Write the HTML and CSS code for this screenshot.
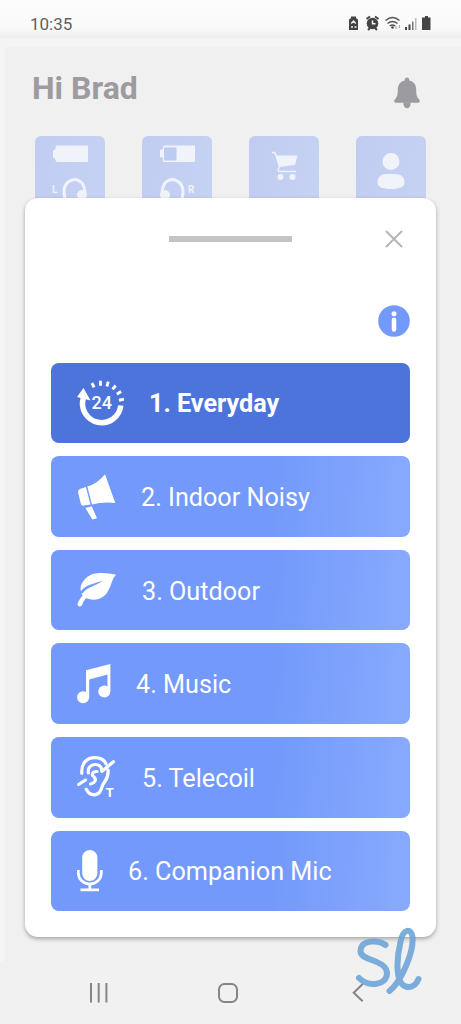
FILE: index.html
```
<!DOCTYPE html>
<html lang="en">
<head>
<meta charset="utf-8">
<title>Programs</title>
<link rel="stylesheet" href="styles.css">
</head>
<body>
<div class="phone">
  <header class="status">
    <span class="time">10:35</span>
    <svg class="status-icons" width="86" height="16" viewBox="0 0 86 16" fill="#444">
      <path d="M3 3V1.500h5V3l2 1.500V15H1V4.500z"/>
      <path d="M3.200 8.500l2.300-2.500 2.300 2.500M3 12h2M6.500 12h2" stroke="#eee" stroke-width="1.400" fill="none"/>
      <circle cx="24.500" cy="8.500" r="5.800"/>
      <path d="M18.500 4l3.500-2.500M30.500 4L27 1.500M20 15l2-2M29 15l-2-2" stroke="#444" stroke-width="2"/>
      <path d="M24.500 5.500v3.300h3" stroke="#f5f5f5" stroke-width="1.500" fill="none"/>
      <path d="M37.500 5.500q7-6 14 0M39.500 8.500q5-4 10 0M41.700 11q2.800-2 5.500 0" stroke="#555" stroke-width="1.500" fill="none"/>
      <circle cx="44.500" cy="12.500" r="1.300"/>
      <path d="M48 11v3M51.500 10v3" stroke="#aaa" stroke-width="1.200"/>
      <path d="M57 12h2v3h-2zM60.500 9.500h2V15h-2z"/>
      <path d="M64 6.500h1.500V15H64z" fill="#777"/>
      <path d="M67 3h1.500v12H67z" fill="#bbb"/>
      <path d="M77 2.500V1h3v1.500h2.500V15h-8.500V2.500z"/>
    </svg>
  </header>
  <main class="home">
    <div class="greeting">
      <h1>Hi Brad</h1>
      <svg width="26" height="32" viewBox="0 0 26 32" fill="#9c9ca0">
        <path d="M13 .500c1.600 0 2.300 1.200 2.300 2.900 4.800 1 6.900 4.600 6.900 9.100 0 5.500.600 7.500 3.200 10.200.900 1.300.200 3-1.600 3H2.200c-1.800 0-2.500-1.700-1.600-3 2.600-2.700 3.200-4.700 3.200-10.200 0-4.500 2.100-8.100 6.900-9.100C10.700 1.700 11.400.500 13 .500z"/>
        <path d="M9.500 25.500h7v2q-.800 3.800-3.500 3.800t-3.500-3.800z"/>
      </svg>
    </div>
    <div class="tiles">
      <div class="tile">
        <svg width="70" height="80" viewBox="0 0 70 80" fill="#f0f3fa">
          <path d="M22 9.500h30q1 0 1 1v14.500q0 1-1 1H22q-1.500 0-1.500-2.500l-2.500-2.500v-6l2.500-2q0-3.500 1.500-3.500z"/>
          <path d="M32 69q-6-15 0-22 8-7 15 0 3 4 3 12" stroke="#f0f3fa" stroke-width="3" fill="none"/>
          <circle cx="47" cy="59" r="5"/>
          <text class="side" x="17" y="57">L</text>
        </svg>
      </div>
      <div class="tile">
        <svg width="70" height="80" viewBox="0 0 70 80" fill="#f0f3fa">
          <path d="M22 9.500h30q1 0 1 1v14.500q0 1-1 1H22q-1 0-1-1v-3l-3-1v-7l3-1v-2q0-1 1-1z"/>
          <path d="M22 11.500h12.500v13H22z" fill="#bccbf2"/>
          <path d="M38 69q6-15 0-22-8-7-15 0-3 4-3 12" stroke="#f0f3fa" stroke-width="3" fill="none"/>
          <circle cx="23" cy="59" r="5"/>
          <text class="side" x="46" y="57">R</text>
        </svg>
      </div>
      <div class="tile">
        <svg width="70" height="80" viewBox="0 0 70 80" fill="#f0f3fa">
          <path d="M27 19.500h21.500L46 29 30 31z"/>
          <path d="M23 16.500h2.500l1.500 2.500 3.500 12-1.500 3 1 1.500h17" stroke="#f0f3fa" stroke-width="1.500" fill="none"/>
          <circle cx="31.500" cy="41" r="3"/><circle cx="43.500" cy="41" r="3"/>
        </svg>
      </div>
      <div class="tile">
        <svg width="70" height="80" viewBox="0 0 70 80" fill="#f0f3fa">
          <circle cx="35" cy="25.500" r="8.500"/>
          <path d="M21.500 46.500q0-8.500 9-8.500h9q9 0 9 8.500 0 6.500-13.500 6.500t-13.500-6.500z"/>
        </svg>
      </div>
    </div>
  </main>
  <nav class="navbar">
    <svg width="20" height="20" viewBox="0 0 20 20"><path d="M3 0v19.500M10.700 0v19.500M18.400 0v19.500"/></svg>
    <svg width="20" height="20" viewBox="0 0 20 20"><rect x="1" y="1" width="18" height="18" rx="5.500"/></svg>
    <svg width="12" height="20" viewBox="0 0 12 20"><path d="M10.700 1L1.700 9.700l9 8.600"/></svg>
  </nav>

  <section class="sheet">
    <div class="sheet-top">
      <span class="handle"></span>
      <svg class="close" width="18" height="18" viewBox="0 0 18 18"><path d="M1 1l16 16M17 1L1 17"/></svg>
    </div>
    <svg class="info" width="32" height="32" viewBox="0 0 32 32">
      <circle cx="16" cy="16" r="15.800" fill="#7299fb"/>
      <circle cx="16" cy="8.800" r="2.500" fill="#fff"/>
      <path d="M16 14.800v9.800" stroke="#fff" stroke-width="4.500" stroke-linecap="round"/>
    </svg>
    <div class="programs">
      <div class="program active">
        <svg width="47" height="48" viewBox="0 0 47 48">
          <path d="M43.800 26.500A19.200 19.200 0 1 1 6.300 19" fill="none" stroke="#fff" stroke-width="5.500"/>
          <path d="M6.500 9L13.500 21.500 0 18z" fill="#fff"/>
          <path d="M17.100 8.400L14.900 4M23.600 6.700l-.200-4.900M29.900 7.500l1.400-4.800M35.600 10.400l3.100-3.900M39.800 15.200l4.300-2.600M42 21.200l5-.900" stroke="#fff" stroke-width="2.900"/>
          <text class="hours" x="14.500" y="30">24</text>
        </svg>
        <span>1. Everyday</span>
      </div>
      <div class="program">
        <svg width="39" height="48" viewBox="0 0 39 48" fill="#fff">
          <path d="M28 1.300L38.300 30Q26 28.500 15 31.600L10.300 13.500Q21 10.500 28 1.300z"/>
          <path d="M8.900 14L3 16q-2.500 1.200-1.900 3.500l2.700 11q.700 2.600 3 2.100l6.700-1.200z"/>
          <path d="M8.500 35l6.200-1.700L20 45.200l-4.700 1.400z"/>
        </svg>
        <span>2. Indoor Noisy</span>
      </div>
      <div class="program">
        <svg width="40" height="48" viewBox="0 0 40 48">
          <path d="M39.200 8.800C35 12 34.500 20 30.500 26 25.500 34 17 35 9 32.300 6.500 35 5.500 38 4.500 39.700 3.500 41 0 40.500.500 38 1.500 34.500 3.500 32 5.500 29.500 2 23 3.500 17 9 12 16 5.500 28 6.500 39.200 8.800z" fill="#fff"/>
          <path d="M3 26.500C8 18.500 17 18 25.800 14.600 20 20 11 20 5.400 27.600z" fill="#7299fb"/>
        </svg>
        <span>3. Outdoor</span>
      </div>
      <div class="program">
        <svg width="34" height="48" viewBox="0 0 34 48" fill="#fff">
          <path d="M9 10.200L33.400 3.900V31.500h-2.900v-17L12.200 19.500v18H9z"/>
          <circle cx="6.100" cy="37.300" r="6"/><circle cx="27.300" cy="31.500" r="6"/>
        </svg>
        <span>4. Music</span>
      </div>
      <div class="program">
        <svg width="40" height="48" viewBox="0 0 40 48" fill="none" stroke="#fff" stroke-width="3.200" stroke-linecap="round">
          <path d="M4.800 20.500C4 10 10 4.700 18 4.700c6 0 9.500 2.600 11 6.200M31 17c1 9-3.500 10.500-5.500 15.500C24 37.500 22.500 41.800 17 41.800c-3.500 0-6-2-7.700-5.500"/>
          <path d="M11.400 20c-.800-5.500 2.300-8.500 6.800-8.500 4.800 0 6.500 3 6.600 6.500M20 18.500c-5.500 0-5.500 4-3 5.500 3 2.500.5 6.500-3.500 7"/>
          <path d="M36.500 8.700L25 18.300M1.500 31.500L8.500 27"/>
          <text class="coil" x="28.800" y="43.800">T</text>
        </svg>
        <span>5. Telecoil</span>
      </div>
      <div class="program">
        <svg width="26" height="48" viewBox="0 0 26 48">
          <rect x="5.200" y="3" width="15.200" height="31" rx="7.600" fill="#fff"/>
          <path d="M1.300 23v3a11.500 11 0 0 0 23 0v-3M12.800 37v5M3.500 42.800h18.500" fill="none" stroke="#fff" stroke-width="2.800"/>
        </svg>
        <span>6. Companion Mic</span>
      </div>
    </div>
  </section>

  <svg class="signature" width="90" height="80" viewBox="0 0 90 80">
    <path d="M45.500 25C39 20 21 19 20.500 31 20 41 46 39 47 53 47 66 28 67 19 58"/>
    <path d="M49.500 71C61 62 74 32 72.500 17 71.500 8 63 8 60.500 22 56.500 38 55 63 65.500 66.500 73 68.500 76.500 64 78.500 59"/>
  </svg>
</div>
</body>
</html>
```
FILE: styles.css
```
* { box-sizing: border-box; }
body { margin: 0; font-family: Roboto, "Noto Sans", sans-serif; }
svg { display: block; flex: none; }

.phone {
  position: relative;
  display: flex;
  flex-direction: column;
  width: 461px;
  height: 1024px;
  overflow: hidden;
  background: #f1f1f1;
}
.status {
  display: flex;
  justify-content: space-between;
  align-items: flex-start;
  height: 38px;
  padding: 13px 27px 0 30px;
  background: linear-gradient(#fcfcfc 0, #fafafa 70%, #efefef 100%);
}
.time { font-size: 17px; line-height: 22px; color: #606060; }
.status-icons { margin-top: 2px; }

.home {
  flex: 1;
  border-top: 9px solid #f4f4f4;
  border-left: 5px solid #f4f4f4;
  background: #f0f0f0;
}
.greeting {
  display: flex;
  justify-content: space-between;
  height: 89px;
  padding: 22px 41px 0 27px;
}
.greeting svg { margin-top: 8px; }
h1 {
  margin: 0;
  font-size: 32px;
  line-height: 38px;
  font-weight: 700;
  color: #9c9ca0;
}
.tiles { display: flex; gap: 37px; padding-left: 30px; }
.tile {
  width: 70px;
  height: 80px;
  border-radius: 6px;
  background: linear-gradient(100deg, #c0cdf2, #c6d2f3);
}
.side { font-size: 10px; font-weight: 700; }

.navbar {
  display: flex;
  justify-content: space-between;
  height: 62px;
  padding: 21px 97px 0 88px;
  background: #f1f1f1;
}
.navbar svg { fill: none; stroke: #858585; stroke-width: 2; }
.navbar svg:nth-child(2) { margin-right: 4px; }

.sheet {
  position: absolute;
  left: 25px;
  top: 198px;
  width: 411px;
  height: 739px;
  padding: 32px 26px 26px;
  border-radius: 13px;
  background: #fff;
  box-shadow: 0 2px 4px rgba(0, 0, 0, .32);
}
.sheet-top { display: flex; align-items: center; padding: 0 7px 0 118px; }
.handle { width: 123px; height: 6px; background: #c4c4c4; }
.close { margin-left: auto; stroke: #b6b6b6; stroke-width: 2; }
.info { margin: 57px 0 25.7px auto; }

.programs { display: flex; flex-direction: column; gap: 13px; }
.program {
  display: flex;
  align-items: center;
  gap: 25px;
  height: 80.6px;
  padding-left: 26px;
  border-radius: 8px;
  background: linear-gradient(95deg, #7299fb 60%, #87a9fd 97%);
  color: #fff;
  font-size: 25.2px;
  line-height: 30px;
  white-space: nowrap;
}
.program span { padding-top: 3px; }
.program.active { background: #4c74db; font-weight: 700; }
.hours { font-size: 18px; font-weight: 500; fill: #fff; }
.coil { font-size: 13px; font-weight: 700; fill: #fff; stroke: none; }

.signature {
  position: absolute;
  left: 340px;
  top: 920px;
  fill: none;
  stroke: #6ba3d8;
  stroke-width: 6;
  stroke-linecap: round;
  stroke-linejoin: round;
  opacity: .88;
}
```
